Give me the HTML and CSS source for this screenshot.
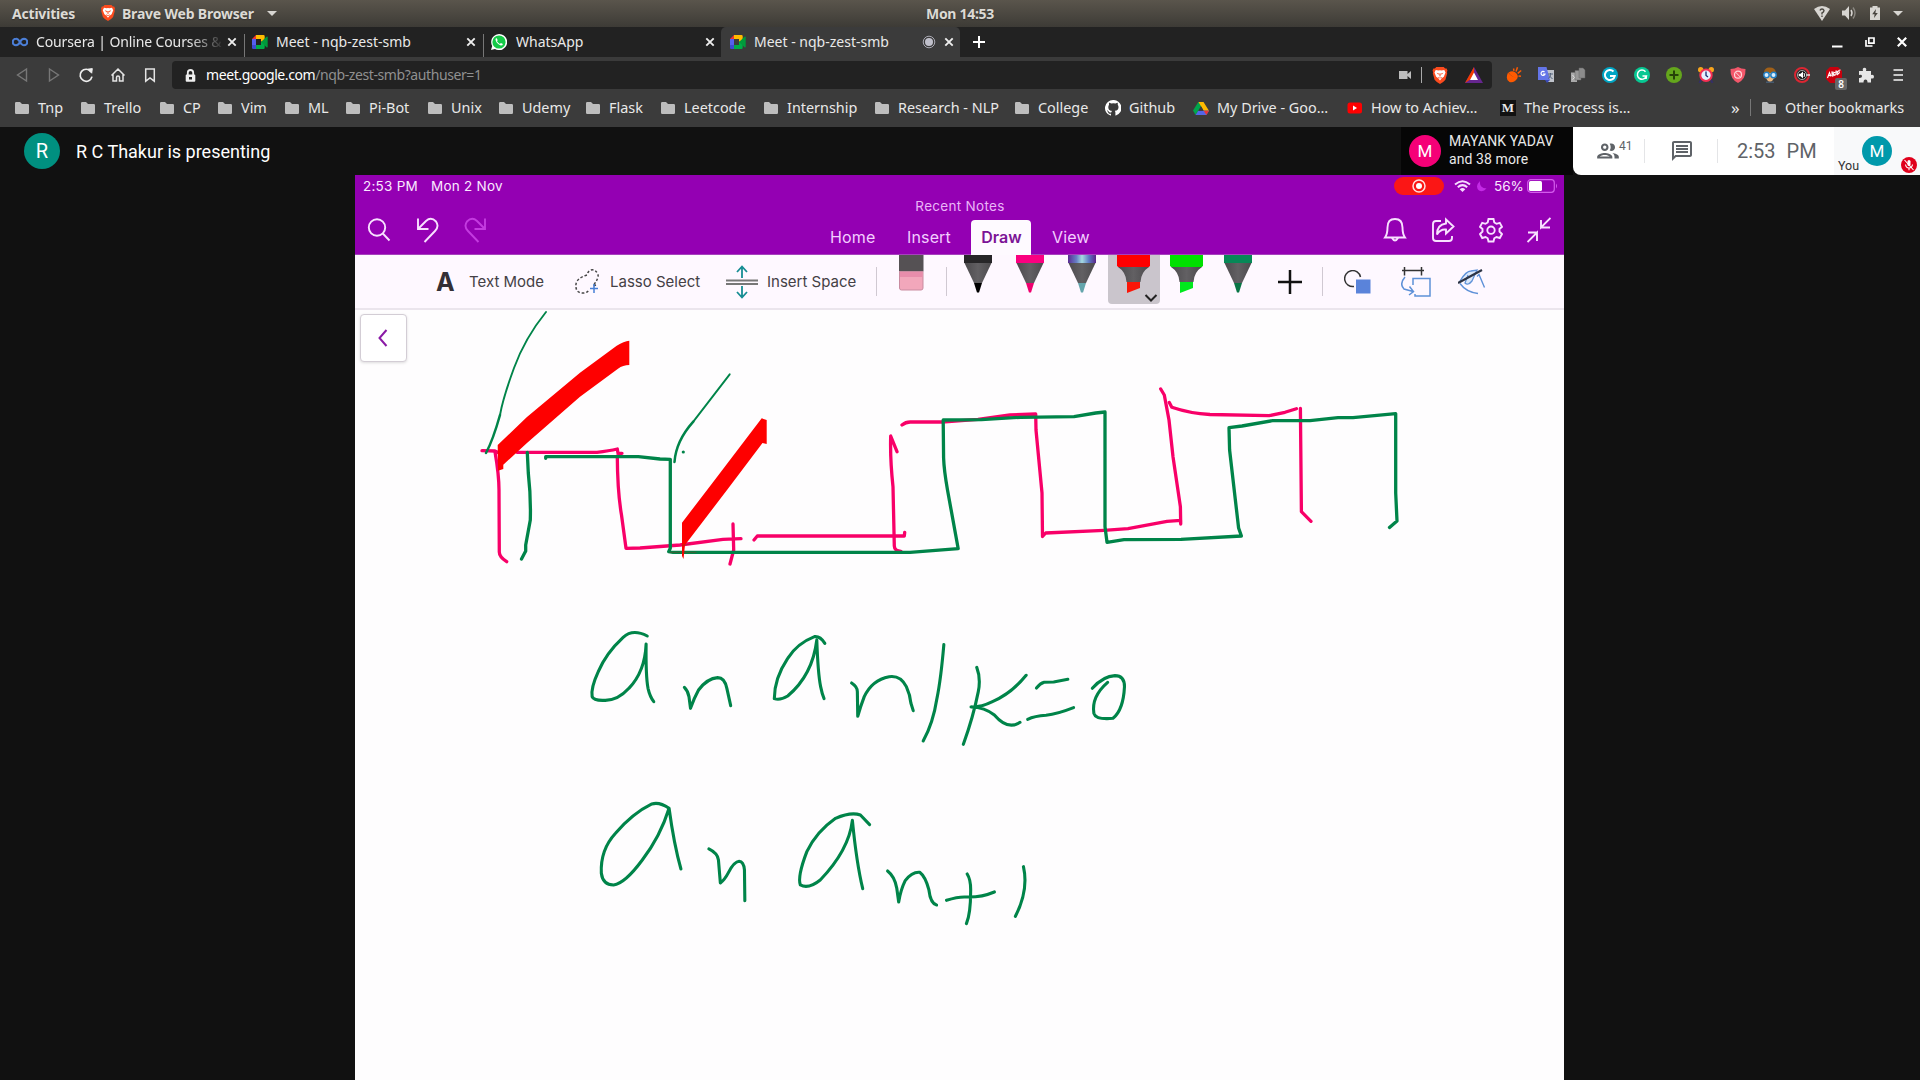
FILE: index.html
```html
<!DOCTYPE html>
<html lang="en">
<head>
<meta charset="utf-8">
<title>Meet - nqb-zest-smb</title>
<link rel="stylesheet" href="styles.css">
</head>
<body>
<svg class="defs" width="0" height="0" aria-hidden="true">
  <defs>
    <symbol id="folder" viewBox="0 0 14 12"><path d="M0 1.2Q0 0 1.2 0H5l2 2h5.800Q14 2 14 3.200V10.800Q14 12 12.800 12H1.200Q0 12 0 10.800Z" fill="#bdbdbd"/></symbol>
    <symbol id="close" viewBox="0 0 10 10"><path d="M1.300 1.300 8.700 8.700M8.700 1.300 1.300 8.700" stroke="#eee" stroke-width="1.900"/></symbol>
    <symbol id="meet" viewBox="0 0 16 14"><path d="M4 0h7.500q1.200 0 1.200 1.200V5L9 7V4H4Z" fill="#fb0"/><path d="M4 0v4H0Z" fill="#e33"/><path d="M0 4h4v6H0Z" fill="#5560ee"/><path d="M0 10h4v4H1.200Q0 14 0 12.800Z" fill="#3d4bd0"/><path d="M4 10h5V7l3.700-2v7.800q0 1.200-1.200 1.200H4Z" fill="#00ac47"/><path d="M9 7l5.500-5.300q1.200-.5 1.200.5v9.600q0 1-1.200.5Z" fill="#009a3b"/></symbol>
    <symbol id="brave" viewBox="0 0 14 16"><path d="M3.500 0h7l1.300 1.400h1.400L14 3.400l-.5 1.500.3 1-1.700 6Q10 14.500 7 16 4 14.500 1.900 11.900l-1.700-6 .3-1L0 3.400l.8-2h1.400Z" fill="#fb4b1e"/><path d="M3 2.800l2.500.5L7 3l1.500.3 2.500-.5 1.200 2.400-1.600 4-2 1.500L7 12.700l-1.600-2-2-1.500-1.600-4Z" fill="#fff"/><path d="M3.800 5.300l2.200.8-.5 1.300ZM10.200 5.300L8 6.100l.5 1.300ZM6.300 6h1.400L7.400 9H6.600ZM5 9.300l2 .9 2-.9-.7 1.400H5.700Z" fill="#fb4b1e"/></symbol>
    <linearGradient id="galaxy" x1="0" x2="1" y1="0" y2="0"><stop offset="0" stop-color="#5b2c93"/><stop offset=".3" stop-color="#667fc4"/><stop offset=".5" stop-color="#a5dae0"/><stop offset=".75" stop-color="#5d78c4"/><stop offset="1" stop-color="#5a2488"/></linearGradient>
    <linearGradient id="barrel" x1="0" x2="1" y1="0" y2="0"><stop offset="0" stop-color="#4c4a4d"/><stop offset=".5" stop-color="#626063"/><stop offset="1" stop-color="#4c4a4d"/></linearGradient>
    <symbol id="pen" viewBox="0 0 28 38"><path d="M0 0H28V8H0Z" fill="var(--cap)"/><path d="M.5 8H27.500L18 28H10Z" fill="url(#barrel)"/><path d="M10 28h8l-3 9.500h-2Z" fill="var(--nib)"/></symbol>
    <symbol id="marker" viewBox="0 0 33 38"><path d="M0 0H33V10.500L32 12H1L0 10.500Z" fill="var(--cap)"/><path d="M1 12H32Q24 17 23.500 27H9.500Q9 17 1 12Z" fill="url(#barrel)"/><path d="M10 27H23v6L10 38Z" fill="var(--nib)"/></symbol>
  </defs>
</svg>

<header class="system-bar">
  <span class="activities">Activities</span>
  <span class="app-menu"><svg class="app-icon"><use href="#brave"/></svg><span>Brave Web Browser</span><i class="caret"></i></span>
  <span class="clock">Mon 14:53</span>
  <span class="indicators">
    <svg width="16" height="15" viewBox="0 0 16 15"><path d="M0 3Q8-3 16 3L8 15Z" fill="#d8d6d2"/><path d="M6 4.500Q6.500 3 8 3t2 1.500Q10 6 8 7v1.500M8 9.500v1.500" stroke="#4a4741" stroke-width="1.400" fill="none"/></svg>
    <svg width="15" height="14" viewBox="0 0 15 14"><path d="M0 4.500h3L7 0v14L3 9.500H0Z" fill="#d8d6d2"/><path d="M9 4q2 3 0 6" stroke="#d8d6d2" stroke-width="1.500" fill="none"/><path d="M11 1.500q4 5.500 0 11" stroke="#8b8882" stroke-width="1.400" fill="none"/></svg>
    <svg width="10" height="14" viewBox="0 0 10 14"><path d="M0 1.500h2.500V0h5v1.500H10V14H0Z" fill="#d8d6d2"/><path d="M6 3 2.200 8.300h2.400L4 12l3.800-5H5.400Z" fill="#47443e"/></svg>
    <i class="caret"></i>
  </span>
</header>

<nav class="tab-strip">
  <div class="tab"><svg class="tab-icon" viewBox="0 0 16 16"><path d="M8 8Q6 4.500 4 4.700A3.300 3.300 0 0 0 4 11.300Q6.500 11.200 8 8t4-3.300a3.300 3.300 0 0 1 0 6.600Q10 11.300 8 8Z" stroke="#4b7ed6" stroke-width="2.100" fill="none"/></svg><span class="tab-title fade">Coursera | Online Courses &amp;</span><svg class="tab-close"><use href="#close"/></svg></div>
  <div class="tab"><svg class="tab-icon"><use href="#meet"/></svg><span class="tab-title">Meet - nqb-zest-smb</span><svg class="tab-close"><use href="#close"/></svg></div>
  <div class="tab"><svg class="tab-icon" viewBox="0 0 16 16"><path d="M0 16 1.200 12A8 8 0 1 1 4 14.900Z" fill="#fff"/><circle cx="8" cy="8" r="6.600" fill="#15ca48"/><path d="M5.800 4.200q-.9-.3-1.300.9.100 4 5.300 6.500 1.900 0 2.100-1.500L9.900 9l-1 .9Q7 9 6 7.200l.7-.9Z" fill="#fff"/></svg><span class="tab-title">WhatsApp</span><svg class="tab-close"><use href="#close"/></svg></div>
  <div class="tab active"><svg class="tab-icon"><use href="#meet"/></svg><span class="tab-title">Meet - nqb-zest-smb</span><svg class="recording" viewBox="0 0 14 14"><circle cx="7" cy="7" r="5.800" fill="none" stroke="#a9a9b3"/><circle cx="7" cy="7" r="4" fill="#c0c0cb"/></svg><svg class="tab-close"><use href="#close"/></svg></div>
  <div class="new-tab"><svg width="12" height="12" viewBox="0 0 12 12"><path d="M6 0v12M0 6h12" stroke="#fff" stroke-width="2"/></svg></div>
  <div class="window-buttons">
    <svg width="11" height="12" viewBox="0 0 11 12"><path d="M0 10.500h10.500" stroke="#fff" stroke-width="2"/></svg>
    <svg width="10" height="10" viewBox="0 0 10 10"><path d="M3.800 1h5.200v5.200H3.800ZM1 3v6h6.500" fill="none" stroke="#fff" stroke-width="1.700"/></svg>
    <svg width="10" height="10" viewBox="0 0 10 10"><path d="M.8.800 9.200 9.200M9.200.8.800 9.200" stroke="#fff" stroke-width="2.200"/></svg>
  </div>
</nav>

<div class="toolbar">
  <div class="nav-buttons">
    <svg viewBox="0 0 16 16"><path d="M12.500 2v12L3.500 8Z" fill="none" stroke="#777" stroke-width="1.400"/></svg>
    <svg viewBox="0 0 16 16"><path d="M3.500 2v12l9-6Z" fill="none" stroke="#777" stroke-width="1.400"/></svg>
    <svg viewBox="0 0 16 16"><path d="M13 4.700A6 6 0 1 0 14 9.600" fill="none" stroke="#eee" stroke-width="1.700"/><path d="M9.700 2.200 14.300 1.600 13.700 6.200Z" fill="#eee" stroke="#eee"/></svg>
    <svg viewBox="0 0 16 16"><path d="M1.500 8.500 8 2l6.500 6.500M3 7.500V14h3.500v-3.500a1.500 1.500 0 0 1 3 0V14H13V7.500" fill="none" stroke="#e4e4e4" stroke-width="1.500"/></svg>
    <svg viewBox="0 0 16 16"><path d="M3.700 2h8.600v12.200L8 11l-4.300 3.200Z" fill="none" stroke="#e4e4e4" stroke-width="1.500"/></svg>
  </div>
  <div class="address">
    <svg class="lock" viewBox="0 0 11 13"><path d="M2.800 6V3.700a2.700 2.700 0 0 1 5.400 0V6" fill="none" stroke="#eee" stroke-width="1.800"/><rect x=".7" y="5.500" width="9.600" height="7.200" rx="1" fill="#eee"/><path d="M4 8h3v2.500H4Z" fill="#222"/></svg>
    <span class="url"><b>meet.google.com</b>/nqb-zest-smb?authuser=1</span>
    <svg class="camera" viewBox="0 0 12 10"><path d="M0 1h8.500v3L12 1v8L8.500 6v3H0Z" fill="#bdbdbd"/></svg>
    <i class="address-rule"></i>
    <svg class="shield"><use href="#brave"/></svg>
    <svg class="rewards" viewBox="0 0 18 16"><path d="M9 0 18 16H0Z" fill="#66268f"/><path d="M9 0 0 16 9 10Z" fill="#f23a00"/><path d="M9 5.500 13 13H5Z" fill="#fff"/></svg>
  </div>
  <div class="extensions">
    <svg viewBox="0 0 16 16"><path d="M2 5.500 Q5 9.500 11.500 11 8 16.500 3.500 15 -1 12.500 2 5.500Z" fill="#ff5a00"/><path d="M2.500 5.500Q7 3 10 6T11 11.500Q5.500 10 2.500 5.500Z" fill="#ff5a00"/><path d="M7.500 1.500l.5 2.300M11.500.3L10 4.500M11.700 6.300l3.500-2.800M12.500 9l2.500.3" stroke="#ff5a00" stroke-width="1.500"/></svg>
    <svg viewBox="0 0 16 16"><path d="M6 3h10v12H9Z" fill="#bfc3cb"/><path d="M0 0h8.500L12 13H0Z" fill="#6475e8"/><path d="M6.500 5A2 2 0 1 0 7 7H5" stroke="#fff" fill="none" stroke-width="1.200"/><path d="M10 7h5M12.500 6v1.500q0 2-2 4M11 8.500l3.500 3.500" stroke="#53627a" fill="none"/><path d="M7 13h5l-3 3Z" fill="#394ab8"/></svg>
    <svg viewBox="0 0 16 16"><path d="M1 5.500h6V15H1Z" fill="#aaa" /><path d="M5 3.500h5l1 1V13H5Z" fill="#999" stroke="#666" stroke-width=".5"/><path d="M9 1h4l2 2v8H9Z" fill="#8c8c8c" stroke="#666" stroke-width=".5"/><path d="M2.500 8l2 2.500-2 2" fill="none" stroke="#ddd"/></svg>
    <svg viewBox="0 0 16 16"><circle cx="8" cy="8" r="8" fill="#00a5c4"/><path d="M11.500 4.500A5 5 0 1 0 12.800 9H8" fill="none" stroke="#fff" stroke-width="1.900"/></svg>
    <svg viewBox="0 0 16 16"><circle cx="8" cy="8" r="8" fill="#07c893"/><path d="M11.500 4.700A4.600 4.600 0 1 0 12.400 9H8.500M12.400 9l-.3 3" fill="none" stroke="#fff" stroke-width="1.500"/></svg>
    <svg viewBox="0 0 16 16"><circle cx="8" cy="8" r="8" fill="#64a61c"/><path d="M8 3.500v9M3.500 8h9" stroke="#264208" stroke-width="2"/></svg>
    <svg viewBox="0 0 16 16"><circle cx="2.700" cy="2.700" r="2.700" fill="#f8a51c"/><circle cx="13.300" cy="2.700" r="2.700" fill="#f8a51c"/><path d="M3 13l-1.500 3M13 13l1.500 3" stroke="#352f68" stroke-width="2"/><circle cx="8" cy="8.300" r="5.700" fill="#e5f1ff" stroke="#f52f53" stroke-width="2"/><path d="M8 4.500V8.500l2 1.500" fill="none" stroke="#182a70" stroke-width="1.300"/></svg>
    <svg viewBox="0 0 16 16"><path d="M8 0Q11 2 15.500 2 16 12 8 16 0 12 .5 2 5 2 8 0Z" fill="#f3576a"/><circle cx="8" cy="7.700" r="3.500" fill="none" stroke="#ffd6da" stroke-width="1.200"/><path d="M5.600 5.200l4.800 5" stroke="#ffd6da"/></svg>
    <svg viewBox="0 0 16 16"><path d="M2 5Q3 0 8 .5q5 0 6 5l-1 6H3Z" fill="#a06018"/><path d="M4 6h8v5q-2 4-4 4t-4-4Z" fill="#f1bb7e"/><circle cx="4.500" cy="8" r="2.700" fill="#d8efff" stroke="#247fc3" stroke-width="1.500"/><circle cx="11.500" cy="8" r="2.700" fill="#d8efff" stroke="#247fc3" stroke-width="1.500"/><path d="M4 14.500h8v1.500H4Z" fill="#475b70"/></svg>
    <svg viewBox="0 0 16 16"><circle cx="8" cy="8" r="7" fill="#333" stroke="#dc2632" stroke-width="2"/><circle cx="8" cy="8" r="4.500" fill="#111" stroke="#aaa"/><path d="M4.700 6.800H6.500L9 4.600v6.800L6.500 9.200H4.700Z" fill="#fff"/><path d="M10 6q1 2 0 4" stroke="#fff" fill="none"/><path d="M12.500 7.300H16v1.400h-3.500Z" fill="#eee"/></svg>
    <div class="adblock"><svg viewBox="0 0 16 16"><path d="M4 0h8l4 4v7l-4 5H4l-4-4V4Z" fill="#c9000d"/><path d="M1.500 11 3.500 5.500 5 9.500M2 9l3-1M6 9V5l2.500.5L6.500 7 9 8 6 9.200M10 8V4q3 0 1 2 2.500.5 0 2M14.500 3q-2.500 0-1.500 1.500t-1 2.500" stroke="#fff" fill="none" stroke-width="1.100"/></svg><span class="badge">8</span></div>
    <svg viewBox="0 0 16 16"><path d="M1 4h4Q4 1 6.500.7 9 1 8 4h5v4q3-.7 3 1.700T13 11.500V15.500H9.500q0-3-2-3t-2 3H1V11q3 .3 3-1.700T1 8Z" fill="#e6e6e6"/></svg>
    <svg viewBox="0 0 16 16"><path d="M3.500 3h9.500M3.500 8h9.500M3.500 13h9.500" stroke="#c7c7c7" stroke-width="1.800"/></svg>
  </div>
</div>

<div class="bookmarks">
  <a><svg><use href="#folder"/></svg>Tnp</a><a><svg><use href="#folder"/></svg>Trello</a><a><svg><use href="#folder"/></svg>CP</a><a><svg><use href="#folder"/></svg>Vim</a><a><svg><use href="#folder"/></svg>ML</a><a><svg><use href="#folder"/></svg>Pi-Bot</a><a><svg><use href="#folder"/></svg>Unix</a><a><svg><use href="#folder"/></svg>Udemy</a><a><svg><use href="#folder"/></svg>Flask</a><a><svg><use href="#folder"/></svg>Leetcode</a><a><svg><use href="#folder"/></svg>Internship</a><a><svg><use href="#folder"/></svg>Research - NLP</a><a><svg><use href="#folder"/></svg>College</a>
  <a class="site"><svg viewBox="0 0 16 16"><path d="M8 0a8 8 0 0 0-2.500 15.600c.4.100.5-.2.500-.4v-1.500c-2 .5-2.700-.9-2.900-1.500-.2-.4-.6-1-.9-1.200s-.4-.6 0-.6c.8 0 1.300.7 1.500 1 .9 1.400 2.200 1 2.700.8.100-.6.300-1 .6-1.300C5 10.700 3.300 10 3.300 7c0-.9.300-1.600.8-2.200-.1-.2-.4-1 .1-2.100 0 0 .7-.2 2.200.8a7.500 7.500 0 0 1 4 0c1.500-1 2.200-.8 2.200-.8.400 1.100.2 1.900.1 2.100.5.600.8 1.300.8 2.200 0 3-1.800 3.700-3.700 3.900.3.300.6.800.6 1.500v2.800c0 .2.100.5.500.4A8 8 0 0 0 8 0Z" fill="#fff"/></svg>Github</a>
  <a class="site"><svg viewBox="0 0 16 16"><path d="M5.300 2h5.400L5.200 11 2.600 15 0 10.500Z" fill="#00a54c"/><path d="M5.500 2h5L16 10.700h-5.300Z" fill="#ffba00"/><path d="M5.200 10.700H16L13.400 15H2.600Z" fill="#5366e8"/><path d="M10.700 10.700H16L13.400 15Z" fill="#ea3535"/><path d="M8 6.300 10.500 10.700H5.400Z" fill="#3b3b3b"/></svg>My Drive - Goo…</a>
  <a class="site"><svg viewBox="0 0 16 16"><rect x=".5" y="2.500" width="14.500" height="11" rx="2.500" fill="#f00"/><path d="M6 5.500v5L10 8Z" fill="#fff"/></svg>How to Achiev…</a>
  <a class="site medium"><span class="m-logo">M</span>The Process is…</a>
  <span class="more">»</span>
  <a class="other"><svg><use href="#folder"/></svg>Other bookmarks</a>
</div>

<main class="meeting">
  <div class="meet-bar">
    <span class="avatar presenter">R</span>
    <span class="presenting">R C Thakur is presenting</span>
    <div class="speaker"><span class="avatar">M</span><span class="speaker-name">MAYANK YADAV<br>and 38 more</span></div>
    <div class="controls">
      <div class="people"><svg width="26" height="26" viewBox="0 0 24 24"><path d="M9 13.750c-2.340 0-7 1.170-7 3.500V19h14v-1.750c0-2.330-4.660-3.500-7-3.500zM4.340 17c.84-.58 2.870-1.250 4.660-1.250s3.820.67 4.660 1.250H4.340zM9 12c1.930 0 3.500-1.570 3.500-3.500S10.930 5 9 5 5.500 6.570 5.500 8.500 7.070 12 9 12zm0-5c.83 0 1.500.67 1.500 1.500S9.830 10 9 10s-1.500-.67-1.500-1.500S8.170 7 9 7zm7.040 6.810c1.160.84 1.960 1.960 1.960 3.440V19h4v-1.750c0-2.020-3.500-3.170-5.960-3.440zM15 12c1.930 0 3.500-1.570 3.500-3.500S16.930 5 15 5c-.54 0-1.040.130-1.500.350.63.89 1 1.980 1 3.150s-.37 2.260-1 3.150c.46.220.96.350 1.500.350z" fill="#5f6368"/></svg><span>41</span></div>
      <div class="chat"><svg width="24" height="24" viewBox="0 0 24 24"><path d="M4 4h16v12H5.170L4 17.170V4m0-2c-1.100 0-1.990.9-1.990 2L2 22l4-4h14c1.100 0 2-.9 2-2V4c0-1.100-.9-2-2-2H4zm2 10h12v2H6v-2zm0-3h12v2H6V9zm0-3h12v2H6V6z" fill="#5f6368"/></svg></div>
      <div class="time"><span>2:53</span><span>PM</span></div>
      <div class="you"><span>You</span><span class="avatar">M</span><svg class="muted" viewBox="0 0 16 16"><circle cx="8" cy="8" r="8" fill="#e0001b"/><rect x="6.500" y="3" width="3" height="6" rx="1.500" fill="#fff"/><path d="M4.500 7.500q.5 3.500 3.500 3.500t3.500-3.500M8 11v2.300M3.500 3l9 10" stroke="#fff" fill="none" stroke-width="1.100"/></svg></div>
    </div>
  </div>

  <section class="share">
    <div class="note-header">
      <div class="status"><span class="s-time">2:53 PM</span><span class="s-date">Mon 2 Nov</span>
        <span class="rec"><svg width="14" height="14" viewBox="0 0 14 14"><circle cx="7" cy="7" r="6" fill="none" stroke="#ffe0e0" stroke-width="1.500"/><circle cx="7" cy="7" r="3" fill="#fff"/></svg></span>
        <svg class="wifi" viewBox="0 0 17 12"><path d="M1 4.500Q8.500-2 16 4.500M3.800 7.300Q8.500 3 13.200 7.300" fill="none" stroke="#f6dcff" stroke-width="2"/><path d="M5.700 9.200Q8.500 6.700 11.300 9.200L8.500 12Z" fill="#f6dcff"/></svg>
        <svg class="moon" viewBox="0 0 11 12"><path d="M4 1Q3 8 10.500 8.500 7 12.500 3 10.500-1.500 6.500 4 1Z" fill="#c32be5"/></svg>
        <span class="percent">56%</span>
        <svg class="battery" viewBox="0 0 31 14"><rect x=".7" y=".7" width="26.600" height="12.600" rx="3" fill="none" stroke="#d35bec" stroke-width="1.200"/><rect x="2" y="2" width="13" height="10" rx="1.500" fill="#fff"/><path d="M29 4.500q2 2.500 0 5Z" fill="#d35bec"/></svg>
      </div>
      <div class="note-title">Recent Notes</div>
      <div class="ribbon">
        <div class="left-tools">
          <svg viewBox="0 0 24 26"><circle cx="10" cy="10.500" r="8.200"/><path d="M15.800 16.500 22.500 23.500"/></svg>
          <svg viewBox="0 0 24 26"><path d="M3 1.500V12h10.500M3 12 11 4Q16-.5 21 4.500 24.500 9.500 20 14L9.500 25"/></svg>
          <svg class="dim" viewBox="0 0 24 26"><path d="M22 1.500V12H11.500M22 12 14 4Q9-.5 4 4.500.5 9.500 5 14L15.500 25"/></svg>
        </div>
        <span>Home</span><span>Insert</span><span class="selected">Draw</span><span>View</span>
        <div class="right-tools">
          <svg viewBox="0 0 24 26"><path d="M2 20.500Q4.500 17 4.500 10.500 4.500 2 12 2t7.500 8.500Q19.500 17 22 20.500ZM9 21q3 5 6 0"/></svg>
          <svg viewBox="0 0 24 26"><path d="M10 4H5Q2 4 2 7V21q0 3 3 3H18q3 0 3-3V19M15 2.500l7.500 7L15 16.500v-4Q9 12 6 17.500 6 7.500 15 6.500Z"/></svg>
          <svg viewBox="0 0 24 26"><path d="M9.500 2h5l.8 3.500 2.200 1.300 3.300-1 2.200 4L20.500 12v2.500L23 17l-2.200 4-3.300-1-2.200 1.300-.8 3.200h-5l-.8-3.200L6.500 20l-3.300 1L1 17l2.500-2.500V12L1 9.800l2.200-4 3.300 1 2.200-1.300Z"/><circle cx="12" cy="13.200" r="3.700"/></svg>
          <svg viewBox="0 0 24 26"><path d="M23.500 1 14 10.500V3M14 10.500h9M.5 25 10 15.500V24M10 15.500H1"/></svg>
        </div>
      </div>
    </div>

    <div class="draw-tools">
      <b class="letter-a">A</b><span>Text Mode</span>
      <svg width="27" height="27" viewBox="0 0 27 27"><path d="M22 17 19 18Q25 10 24 7 22 1 17 2q-3 1-4 5Q3 10 2 16q-1 9 7 9 4 0 6-3" fill="none" stroke="#444" stroke-width="1.500" stroke-dasharray="2.500 2"/><path d="M20 16v9M16 20.500h8" stroke="#477fd6" stroke-width="1.500"/></svg><span>Lasso Select</span>
      <svg width="33" height="34" viewBox="0 0 33 34"><path d="M0 15.500h32M0 19h32" stroke="#777" stroke-width="1.800"/><path d="M16 13V2M11 7l5-5.500L21 7M16 21v11M11 27l5 5.500 5-5.500" fill="none" stroke="#168d93" stroke-width="1.800"/></svg><span>Insert Space</span>
      <i class="rule"></i>
      <svg class="top" width="25" height="36" viewBox="0 0 25 36"><path d="M0 0h24.500v16.500H0Z" fill="#555154"/><path d="M.5 16.500h23.500V33q0 2-2 2H2.500q-2 0-2-2Z" fill="#f2a7bb" stroke="#c98ba0"/><path d="M1 17h22.500v5H1Z" fill="#e88dab"/></svg>
      <i class="rule"></i>
      <svg class="top pen black"><use href="#pen"/></svg>
      <svg class="top pen pink"><use href="#pen"/></svg>
      <svg class="top pen stars"><use href="#pen"/></svg>
      <div class="picked"><svg class="marker red"><use href="#marker"/></svg><svg class="chevron" viewBox="0 0 14 8"><path d="M1.500 1 7 6.500 12.500 1" fill="none" stroke="#222" stroke-width="2"/></svg></div>
      <svg class="top marker lime"><use href="#marker"/></svg>
      <svg class="top pen green"><use href="#pen"/></svg>
      <svg width="24" height="24" viewBox="0 0 24 24"><path d="M12 0v24M0 12h24" stroke="#111" stroke-width="2.500"/></svg>
      <i class="rule"></i>
      <svg width="27" height="24" viewBox="0 0 27 24"><path d="M10 16.500A8 8 0 1 1 16.500 7" fill="none" stroke="#333" stroke-width="1.500"/><rect x="12" y="9.500" width="14.500" height="14" fill="#5a83da"/></svg>
      <svg width="30" height="30" viewBox="0 0 30 30"><path d="M1 3.500h22M3.500 0v8.500M20.500 0v8.500" stroke="#333" stroke-width="1.500"/><path d="M12 18v-6.500h17V29H14v-2M4 10Q-2 17 3 22l9 2.500M8.500 19.500l4 5L8 28" fill="none" stroke="#5e91d8" stroke-width="1.500"/></svg>
      <svg width="28" height="26" viewBox="0 0 28 26"><path d="M2 12Q8 2 13 2l6-1L14 12Q10 17 7 14L10 6" fill="#dbe8fa" stroke="#5e91d8" stroke-width="1.300"/><path d="M2 14.500Q8 23 20 24.500M19 7.500l2-2 5.500 13" fill="none" stroke="#5e91d8" stroke-width="1.400"/><path d="M0 14 24 1" stroke="#2c3445" stroke-width="2.200"/></svg>
    </div>

    <div class="canvas">
      <svg class="ink" viewBox="355 310 1209 770">
        <g class="pink">
          <path d="M482 450.700L495 451 499 453M517 452.300H597Q609 451 617.300 449L618 453.300 622 453.300"/>
          <path d="M495 451.700Q499 475 499 490L499.300 552Q499.300 557 506.700 561.700"/>
          <path d="M617.300 456Q617.500 492 621.500 515L626 548.300 640 548 680 545 723 539.300 741 538.700M733 524L733.700 550 730 564"/>
          <path d="M754 540L757.300 536H904.300L904.700 532.500M897 451.700L890.700 436Q890 459 893 486.700L894.300 546Q894.500 551 901 551.300"/>
          <path d="M902 425Q906 421.700 911 422H942L978 419.300 1010 415 1035.700 414 1036 430 1042 493 1042.500 536.500 1045.700 533 1104 530.300 1128 528.700 1167 521.300 1180.700 520.300V524L1180.400 506.700 1173 456.700 1169 420 1164.300 395 1160.700 389"/>
          <path d="M1169.300 402.500L1171.800 407.300Q1190 413.500 1210 414.500L1269 415.700 1285 412.300 1296.400 408.700M1300.400 408.300L1301.400 511.700 1311 521.300"/>
        </g>
        <g class="green">
          <path class="fine" d="M546 312Q525 338 514 368T500 415"/><path d="M500 415Q493 440 486 453" stroke-width="2.500"/>
          <path d="M527.300 452.500L528.300 473Q531 497 530.300 520L525.700 545V551L521.500 559"/>
          <path d="M545.700 458.300V456.700H638.300L660 459 670.300 459.300V548.300L668.700 551.700 673 552.300H910L958.200 548.700 947.500 490Q944 470 943.600 458L943.200 420 981.400 419.700 1020.700 417.300 1074 416.700 1095.700 413 1105 412V526.700L1107 542.300 1124 539.700 1181 539.300 1241.400 536 1238.600 528 1229.600 450 1229 427.700 1242 426 1272.500 420.700H1310L1338 417.700H1353L1395.700 413.700V493L1397 521 1389.500 527.500"/>
          <path class="fine" d="M729.700 374.300L693.300 421.700"/><path d="M693.300 421.700Q676 441 674.500 462" stroke-width="2.500"/><circle cx="683.300" cy="452" r="1.600"/>
        </g>
        <g class="highlight">
          <path d="M497.700 445 526.700 417.300 580 372.700 616.700 345.700Q624 341 629.300 340.700V365Q623 365 618 368.700L580 396.700 526.700 443.300 503.300 464.700V469L498 470.700Z"/>
          <path d="M682 522.700 713 482.300 761.700 418.300 766.700 420V444L762.500 443 727 490 685 545 683.500 559 682 556Z"/>
        </g>
        <path class="over" d="M682 545.200L690 544.200M670 552.300H696"/>
        <g class="green formula" transform="translate(560 600) scale(.3827 .3333)">
          <path d="M228 108Q190 85 165 112 120 160 100 215 80 265 84 290 88 302 115 301 150 303 180 265 222 215 225 132 224 230 230 265 235 290 245 305"/>
          <path d="M325 262Q334 272 337 290L341 325Q350 295 362 270 385 235 412 233 430 233 436 265L446 317"/>
          <path d="M692 130Q680 108 665 110 620 130 595 175 560 235 560 296 575 302 595 288 660 225 671 120 674 220 681 260 685 283 690 296"/>
          <path d="M762 249Q777 260 777 275L778 349Q785 320 795 290 815 240 860 230 890 225 905 260 915 285 917 310L923 332"/>
          <path d="M1003 134Q995 240 985 295 975 370 949 423"/>
          <path d="M1089 202Q1100 235 1093 275 1080 350 1054 433M1218 226Q1180 280 1130 305 1100 322 1074 321 1110 322 1135 345 1170 392 1202 367"/>
          <path d="M1245 264Q1255 250 1265 247L1290 246 1327 238M1222 358Q1240 348 1270 346 1300 342 1342 323"/>
          <path d="M1391 265Q1420 228 1450 227 1475 227 1475 260 1472 330 1445 355 1400 360 1395 340 1388 290 1431 247"/>
          <path d="M285 625Q260 605 240 612 190 640 145 700 105 750 108 820 112 855 140 855 170 850 215 780 262 710 285 625 298 735 316 807"/>
          <path d="M389 747Q412 760 414 780L419 849Q430 840 440 818 455 785 468 784 480 785 482 810L483 902"/>
          <path d="M809 674L785 645Q760 635 720 655 670 695 645 755 620 830 628 855 650 868 680 840 755 750 764 661 775 790 791 866"/>
          <path d="M856 813Q875 830 880 865L885 906Q890 870 902 842 920 815 940 817 955 830 964 870 968 910 984 915"/>
          <path d="M1010 901Q1040 890 1060 891 1100 893 1135 876M1064 822Q1074 840 1073 875 1073 940 1062 971M1211 800Q1225 870 1190 949"/>
        </g>
      </svg>
      <div class="back"><svg width="10" height="18" viewBox="0 0 10 18"><path d="M8.500 1 1.500 9l7 8" fill="none" stroke="#8a1aa5" stroke-width="2"/></svg></div>
    </div>
  </section>
</main>
</body>
</html>
```
FILE: styles.css
```css
* { box-sizing: border-box; }
body { margin: 0; width: 1920px; height: 1080px; overflow: hidden; background: #111; font-family: "Noto Sans", "Open Sans", sans-serif; font-size: 14.5px; color: #e9e9e9; white-space: nowrap; display: flex; flex-direction: column; }
svg { display: block; flex: none; }
.defs { position: absolute; }

/* desktop panel */
.system-bar { height: 27px; flex: none; display: grid; grid-template-columns: 101px 825px 888px 1fr; align-items: center; background: linear-gradient(#5a554c, #3d3b36); font-size: 14px; font-weight: 700; color: #dcdad5; text-shadow: 0 1px 1px #2228; padding-bottom: 1px; }
.activities { padding-left: 12px; letter-spacing: -.2px; }
.app-menu { display: flex; align-items: center; }
.app-menu span { width: 140px; letter-spacing: -.2px; }
.clock { letter-spacing: -.3px; }
.app-icon { width: 14px; height: 16px; margin-right: 7px; }
.caret { border: 5px solid transparent; border-top: 5px solid #d8d6d2; border-bottom: 0; margin-left: 5px; }
.indicators { display: flex; align-items: center; gap: 13px; }
.indicators .caret { margin-left: 0; }
.indicators svg:nth-child(2) { margin-left: -1px; }

/* tabs */
.tab-strip { height: 30px; flex: none; display: grid; grid-template-columns: 243px 239px 239px 239px 39px 1fr; background: #222; }
.tab { display: flex; align-items: center; padding: 0 6px 0 8px; border-left: 1px solid transparent; }
.tab:first-child { padding-left: 11px; }
.tab:nth-child(2), .tab:nth-child(3) { background: linear-gradient(#777, #777) 0 100% / 1px 23px no-repeat; }
.tab.active { background: #3b3b3b; border-radius: 5px 5px 0 0; }
.tab-icon { width: 16px; height: 16px; margin-right: 8px; }
.tab-title { flex: 1; font-size: 14px; line-height: 20px; padding-bottom: 1px; }
.tab:nth-child(3) .tab-title { padding-left: 1px; }
.fade { -webkit-mask: linear-gradient(90deg, #000 80%, transparent 99%); mask: linear-gradient(90deg, #000 80%, transparent 99%); letter-spacing: -.12px; }
.tab-close { width: 10px; height: 10px; }
.recording { width: 14px; height: 14px; margin-right: 8px; }
.new-tab { display: flex; align-items: center; padding-left: 13px; }
.window-buttons { display: flex; align-items: center; justify-content: flex-end; gap: 22px; padding-right: 13px; }

/* address row */
.toolbar { height: 37px; flex: none; display: flex; background: #3b3b3b; padding-top: 4px; }
.nav-buttons { width: 172px; height: 28px; display: flex; align-items: center; padding-left: 14px; gap: 16px; }
.nav-buttons svg { width: 16px; height: 16px; }
.address { width: 1320px; height: 28px; border-radius: 4px; background: #222; display: flex; align-items: center; padding: 0 9px 0 13px; }
.lock { width: 11px; height: 13px; margin-right: 10px; }
.url { flex: 1; color: #909090; font-size: 14px; letter-spacing: -.41px; padding-bottom: 1px; }
.url b { font-weight: 400; color: #fff; }
.camera { width: 12px; height: 10px; }
.address-rule { width: 1px; height: 16px; background: #aaa; margin: 0 10px; }
.shield { width: 16px; height: 17px; margin-right: 17px; }
.rewards { width: 18px; height: 16px; }
.extensions { height: 28px; display: flex; align-items: center; gap: 16px; padding-left: 14px; }
.extensions svg { width: 16px; height: 16px; }
.adblock { position: relative; }
.badge { position: absolute; left: 9px; top: 11px; width: 12px; height: 12px; border-radius: 2px; background: #666; color: #fff; font-size: 10px; font-weight: 600; line-height: 12px; text-align: center; }

/* bookmarks */
.bookmarks { height: 33px; flex: none; background: #3b3b3b; display: grid; grid-template-columns: 66px 79px 58px 67px 61px 82px 71px 87px 75px 103px 111px 140px 90px 88px 154px 153px 231px 19px 1fr; align-items: center; padding: 0 0 6px 15px; font-size: 14.400px; }
.bookmarks a { display: flex; align-items: center; }
.bookmarks svg { width: 14px; height: 12px; margin-right: 9px; }
.bookmarks .site svg { width: 16px; height: 16px; margin-right: 8px; }
.m-logo { width: 16px; height: 16px; background: #111; font: bold 13px/16px "Liberation Serif", serif; text-align: center; margin-right: 8px; }
.more { font-size: 17px; line-height: 16px; }
.bookmarks .other { height: 17px; border-left: 1px solid #777; padding-left: 11px; }

/* call header */
.meeting { flex: 1; font-family: Roboto, sans-serif; }
.meet-bar { height: 48px; display: flex; align-items: center; }
.avatar { display: grid; place-items: center; flex: none; border-radius: 50%; color: #fff; font-size: 17px; }
.avatar.presenter { width: 36px; height: 36px; background: #009080; margin: 0 16px 0 24px; font-size: 20px; }
.presenting { font-size: 18px; color: #fff; width: 1325px; }
.speaker { width: 172px; height: 48px; background: #060606; display: flex; align-items: center; padding-left: 8px; }
.speaker .avatar { width: 32px; height: 32px; background: #f50077; margin-right: 8px; }
.speaker-name { font-size: 14px; line-height: 18px; letter-spacing: .1px; margin-top: -2px; }
.controls { width: 347px; height: 48px; background: #fff; border-radius: 0 0 0 8px; display: grid; grid-template-columns: 72px 73px 116px 86px; color: #5f6368; overflow: hidden; }
.controls > div { display: flex; align-items: center; }
.people { padding-left: 22px; background: linear-gradient(#e4e5e7, #e4e5e7) 100% 50% / 1px 24px no-repeat; }
.people span { font-size: 12px; margin: -11px 0 0 -2px; }
.chat { padding-left: 25px; background: linear-gradient(#e4e5e7, #e4e5e7) 100% 50% / 1px 24px no-repeat; }
.time { padding-left: 19px; gap: 11px; font-size: 20px; }
.you { background: #f8f9fa; padding-left: 4px; font-size: 13px; color: #333; }
.you > span:first-child { padding-top: 28px; width: 24px; font-size: 12.5px; }
.you .avatar { width: 30px; height: 30px; background: #0099ab; }
.muted { width: 16px; height: 16px; margin: 28px 0 0 9px; }

/* shared tablet screen */
.share { width: 1209px; height: 905px; margin-left: 355px; background: #fefdfe; font-family: Inter, Roboto, sans-serif; }
.note-header { height: 80px; background: #9400b3; border-bottom: 1px solid #a640bd; color: #f3ceff; }
.status { height: 22px; display: flex; align-items: center; padding-left: 8px; font-size: 13.5px; color: #faeaff; }
.s-time { width: 68px; letter-spacing: .25px; }
.s-date { width: 963px; letter-spacing: .25px; }
.rec { width: 50px; height: 18px; border-radius: 9px; background: #fb1615; display: grid; place-items: center; margin-right: 10px; }
.wifi { width: 17px; height: 12px; margin-right: 5px; }
.moon { width: 11px; height: 12px; margin-right: 7px; }
.percent { width: 33px; }
.battery { width: 31px; height: 14px; }
.note-title { height: 23px; line-height: 19px; text-align: center; font-size: 13.5px; letter-spacing: .3px; color: #eab5f8; padding-left: 1px; }
.ribbon { height: 34px; display: grid; grid-template-columns: 474px 77px 65px 80px 332px 1fr; line-height: 34px; font-size: 16px; }
.ribbon > span:not(.selected) { padding-left: 1px; letter-spacing: .15px; }
.selected { width: 60px; height: 35px; background: #fefaff; color: #7c1496; border-radius: 4px 4px 0 0; text-align: center; font-weight: 600; padding-left: 1px; }
.left-tools, .right-tools { display: flex; gap: 24px; padding: 0; margin-top: -3px; }
.left-tools { padding-left: 12px; }
.ribbon svg { width: 24px; height: 26px; fill: none; stroke: #f8e1ff; stroke-width: 1.900; }
.ribbon .dim { stroke: #c43be0; }
.draw-tools { height: 55px; display: grid; grid-template-columns: 33px 105px 36px 116px 41px 109px 23px 47px 18px 53px 52px 39px 62px 54px 54px 44px 22px 57px 57px 1fr; padding-left: 81px; align-items: center; background: #fef8ff; border-bottom: 2px solid #ebe5ed; font-size: 15px; color: #444045; }
.letter-a { font: bold 25px/30px Inter, sans-serif; color: #343036; }
.rule { width: 1px; height: 29px; background: #d0c9d2; }
.top { align-self: start; }
.pen { width: 28px; height: 38px; }
.pen.pink, .pen.stars { margin-left: -1px; }
.marker { width: 33px; height: 38px; }
.black { --cap: #272628; --nib: #000; }
.pink.pen { --cap: #fa0080; --nib: #f0006f; }
.stars { --cap: url(#galaxy); --nib: #64a5ac; }
.red { --cap: #f00; --nib: #fa1608; }
.lime { --cap: #00e000; --nib: #00e91d; }
.green.pen { --cap: #078857; --nib: #087545; }
.picked { align-self: start; width: 52px; height: 49px; background: #cac5cc; border-radius: 0 0 4px 4px; padding-left: 9px; position: relative; }
.chevron { width: 14px; height: 8px; position: absolute; right: 2px; bottom: 2px; }
.canvas { position: relative; height: 770px; }
.ink { width: 1209px; height: 770px; fill: none; stroke-linecap: round; stroke-linejoin: round; stroke-width: 3.300; }
.ink .pink { stroke: #f80068; }
.ink .green { stroke: #008449; }
.ink .fine { stroke-width: 1.900; }
.ink circle { fill: #008449; stroke: none; }
.highlight { fill: #fe0000; }
.over { stroke: #83371b; stroke-width: 1; opacity: .5; }
.formula path { vector-effect: non-scaling-stroke; stroke-width: 3.100; }
.back { position: absolute; left: 5px; top: 4px; width: 47px; height: 48px; border: 1px solid #d3cdd5; border-radius: 4px; background: #fff; box-shadow: 0 1px 3px #0002; display: grid; place-items: center; padding-right: 2px; }
```
